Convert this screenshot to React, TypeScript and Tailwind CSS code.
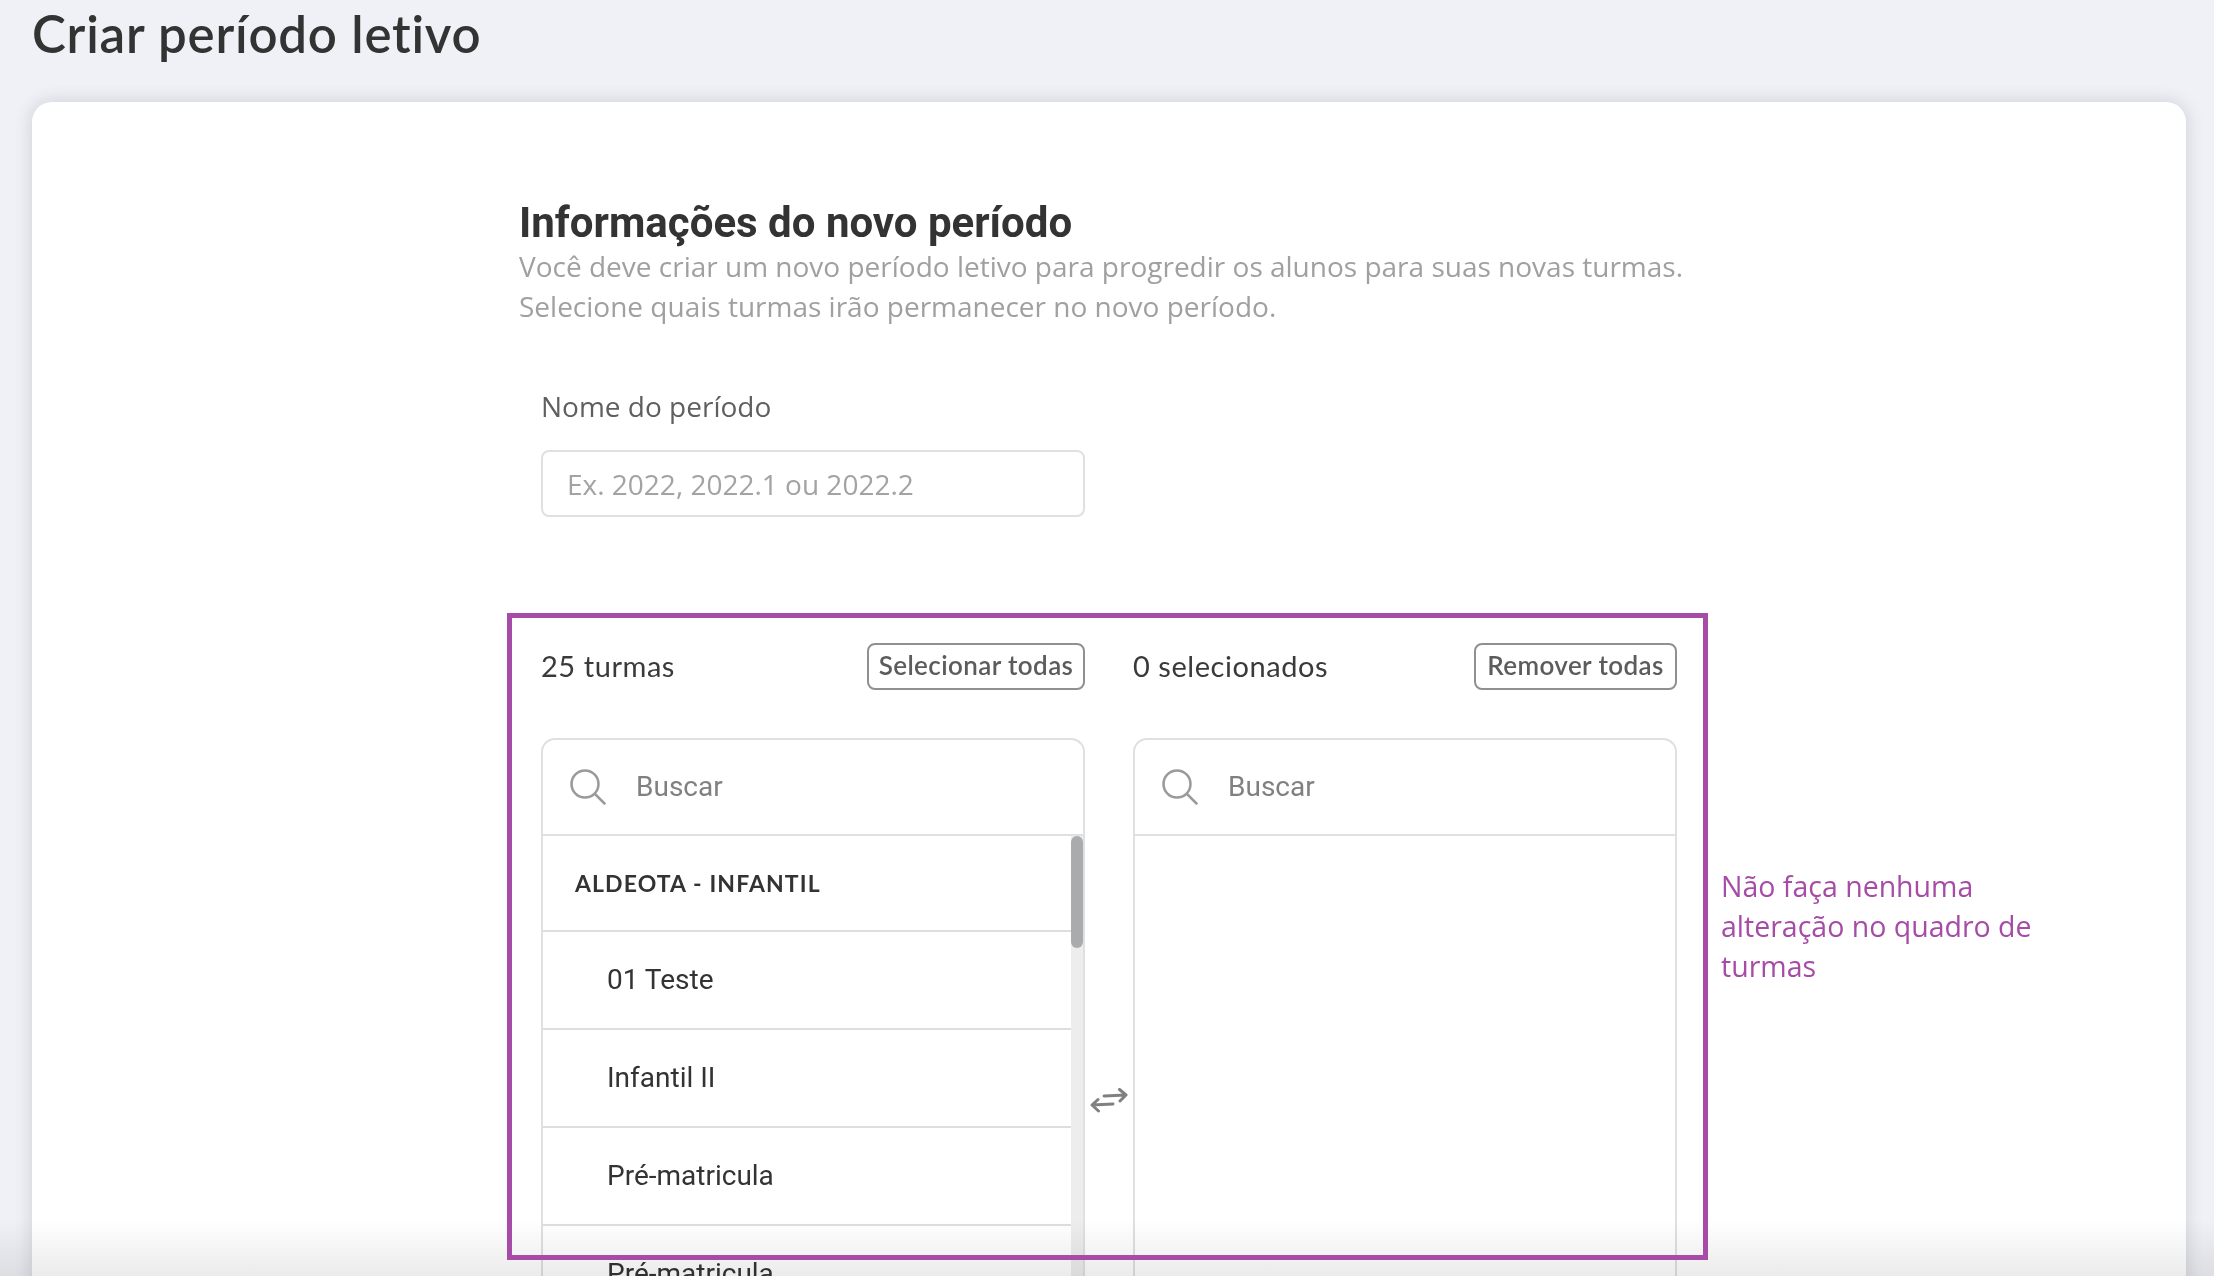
const roboto = { fontFamily: '"Roboto", sans-serif' };

function SearchIcon() {
  return (
    <svg width="36" height="36" viewBox="0 0 36 36" fill="none" stroke="#9a9a9a" strokeWidth="2.5" strokeLinecap="round" className="shrink-0">
      <circle cx="15" cy="15" r="13.5" />
      <path d="M25 25 L34.5 34.5" />
    </svg>
  );
}

function SearchRow() {
  return (
    <div className="h-[96px] shrink-0 border-b-2 border-[#e0e0e2] flex items-center pl-[27px]">
      <SearchIcon />
      <span className="ml-[30px] text-[28px] text-[#808080] font-['Roboto',sans-serif]">Buscar</span>
    </div>
  );
}

function Item({ label, h }: { label: string; h: string }) {
  return (
    <div className={`${h} shrink-0 border-b-2 border-[#dedede] flex items-center pl-[64px] text-[28px] text-[#333333] font-['Roboto',sans-serif]`}>
      {label}
    </div>
  );
}

function ListHeader({ title, action, btn }: { title: string; action: string; btn: string }) {
  return (
    <div className="h-[48px] flex items-center justify-between font-['Lato',sans-serif]">
      <span className="text-[29px] leading-[44px] tracking-[0.55px] text-[#3a3a3a] mb-[2px]">{title}</span>
      <span className={`${btn} h-[47px] mb-[2px] pb-[2px] flex items-center justify-center border-2 border-[#909090] rounded-[8px] text-[26px] font-semibold tracking-[0.4px] text-[#5c5c5c] whitespace-nowrap`}>
        {action}
      </span>
    </div>
  );
}

export default function App() {
  return (
    <div className="relative h-[1276px] overflow-hidden bg-[#f0f1f6] px-[32px]">
      <div className="h-[102px] pt-[4px]">
        <h1 className="text-[51px] leading-[60px] font-semibold text-[#333333] font-['Lato',sans-serif] tracking-[0.78px]">Criar período letivo</h1>
      </div>

      <div className="h-[1300px] w-[2154px] rounded-t-[20px] bg-white shadow-[0_0_18px_rgba(60,64,90,0.2)] pl-[487px] pt-[97px]">
        <h2 style={roboto} className="text-[42px] leading-[48px] font-bold text-[#333333]">Informações do novo período</h2>
        <p className="-mt-[1px] text-[28px] leading-[40px] text-[#a0a0a0] font-['Open_Sans',sans-serif]">
          Você deve criar um novo período letivo para progredir os alunos para suas novas turmas.
          <br />
          Selecione quais turmas irão permanecer no novo período.
        </p>

        <div className="ml-[22px] w-[1136px]">
          <div className="mt-[60px] text-[28px] leading-[40px] text-[#5f5f5f] font-['Open_Sans',sans-serif]">Nome do período</div>
          <div className="mt-[24px] h-[67px] w-[544px] rounded-[8px] border-2 border-[#e0e0e2] flex items-center pl-[24px] text-[28px] text-[#a3a3a3] font-['Open_Sans',sans-serif]">
            Ex. 2022, 2022.1 ou 2022.2
          </div>

          <div className="mt-[126px] flex">
            <div className="w-[544px]">
              <ListHeader title="25 turmas" action="Selecionar todas" btn="w-[218px]" />
            </div>
            <div className="w-[48px]" />
            <div className="w-[544px]">
              <ListHeader title="0 selecionados" action="Remover todas" btn="w-[203px]" />
            </div>
          </div>

          <div className="mt-[47px] flex">
            <div className="w-[544px] h-[600px] rounded-t-[14px] border-2 border-b-0 border-[#e0e0e2] flex flex-col overflow-hidden">
              <SearchRow />
              <div className="flex flex-1 min-h-0">
                <div className="flex-1 flex flex-col overflow-hidden">
                  <div className="h-[96px] shrink-0 border-b-2 border-[#dedede] flex items-center pl-[32px] text-[23px] font-bold tracking-[1.1px] text-[#333333] font-['Lato',sans-serif]">
                    ALDEOTA - INFANTIL
                  </div>
                  <Item label="01 Teste" h="h-[98px]" />
                  <Item label="Infantil II" h="h-[98px]" />
                  <Item label="Pré-matricula" h="h-[98px]" />
                  <Item label="Pré-matricula" h="h-[98px]" />
                </div>
                <div className="w-[12px] shrink-0 bg-[#ededed]">
                  <div className="h-[112px] rounded-full bg-[#a9abad]" />
                </div>
              </div>
            </div>

            <div className="w-[48px] flex justify-center pt-[350px]">
              <svg width="38" height="26" viewBox="0 0 38 26" fill="none" stroke="#808080" strokeWidth="3" strokeLinecap="round" strokeLinejoin="round">
                <path d="M14 8 L36 7 M29.5 1.5 L36 7 L30 13" />
                <path d="M2 17 L23 16 M8 11.5 L2 17 L8.5 23" />
              </svg>
            </div>

            <div className="w-[544px] h-[600px] rounded-t-[14px] border-2 border-b-0 border-[#e0e0e2] flex flex-col">
              <SearchRow />
            </div>
          </div>
        </div>
      </div>

      <div className="absolute inset-x-0 bottom-0 h-[56px] bg-gradient-to-b from-[#ffffff] to-[#ebebeb] mix-blend-multiply" />
      <div className="absolute left-[507px] top-[613px] w-[1201px] h-[647px] border-[5px] border-[#a64ca6]" />
      <div className="absolute left-[1721px] top-[866px] w-[340px] text-[28.5px] leading-[40px] text-[#a64ca6] font-['Open_Sans',sans-serif]">
        Não faça nenhuma alteração no quadro de turmas
      </div>
    </div>
  );
}
